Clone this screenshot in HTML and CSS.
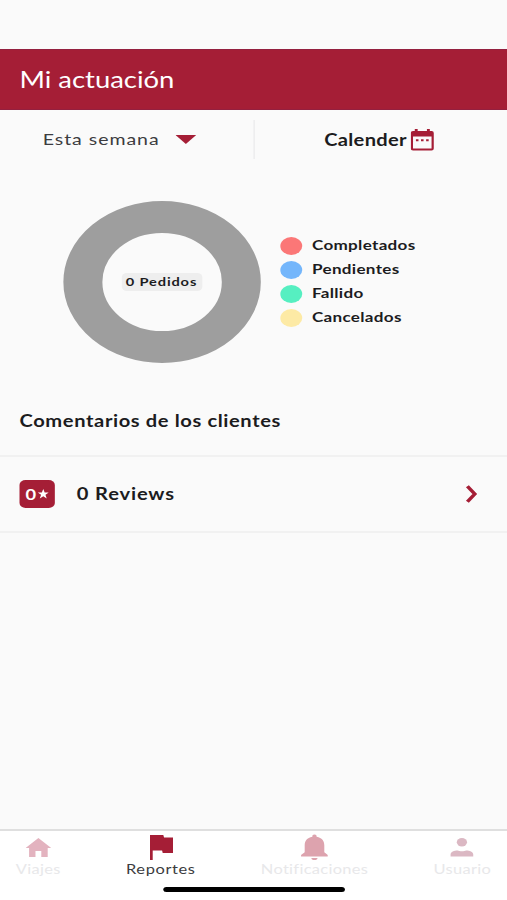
FILE: index.html
```
<!DOCTYPE html>
<html lang="es">
<head>
<meta charset="utf-8">
<title>Mi actuación</title>
<link rel="stylesheet" href="styles.css">
</head>
<body>
<div class="screen">
  <div class="status"></div>
  <header class="header"><h1>Mi actuación</h1></header>
  <div class="filters">
    <div class="filter period"><span>Esta semana</span><svg width="17" height="9" viewBox="0 0 18 10" preserveAspectRatio="none"><path d="M0 0h18L9 10z"/></svg></div>
    <div class="filter calendar"><span>Calender</span><svg width="19" height="22" viewBox="0 0 20 22" preserveAspectRatio="none"><path fill-rule="evenodd" d="M3.500 0h2.500v2h8V0h2.500v2h1.500a2 2 0 0 1 2 2v15.500a2 2 0 0 1-2 2H2a2 2 0 0 1-2-2V4a2 2 0 0 1 2-2h1.500zM2 7.500v12h16v-12zM4.500 10.200h2.200v2H4.500zM8.900 10.200h2.200v2H8.900zM13.300 10.200h2.200v2h-2.200z"/></svg></div>
  </div>
  <section class="chart">
    <div class="donut"><span>0 Pedidos</span></div>
    <ul class="legend">
      <li><i class="dot red"></i><span>Completados</span></li>
      <li><i class="dot blue"></i><span>Pendientes</span></li>
      <li><i class="dot green"></i><span>Fallido</span></li>
      <li><i class="dot yellow"></i><span>Cancelados</span></li>
    </ul>
  </section>
  <h2 class="comments">Comentarios de los clientes</h2>
  <div class="reviews">
    <div class="badge"><span>0</span><svg width="9" height="10" viewBox="0 0 20 20" preserveAspectRatio="none"><path d="M10 0l2.600 7H20l-6 4.600 2.300 7.400L10 14.500 3.700 19 6 11.600 0 7h7.400z"/></svg></div>
    <span class="count">0 Reviews</span>
    <svg class="chevron" width="10" height="18" viewBox="0 0 10 18"><path d="M1.500 1.300L7.600 9l-6.100 7.700"/></svg>
  </div>
  <nav class="nav">
    <a class="item home"><svg width="21" height="26" viewBox="0 0 22 26" preserveAspectRatio="none"><path d="M11 4l11 10h-3v9h-5.500v-6h-5v6H3v-9H0z"/></svg><span>Viajes</span></a>
    <a class="item active"><svg width="19" height="26" viewBox="0 0 19 26"><path d="M0 1h11l.6 2.500H19V19H10.500L10 16.500H2.300V26H0z"/></svg><span>Reportes</span></a>
    <a class="item bell"><svg width="22" height="26" viewBox="0 0 22 26"><path d="M11 .5c1.300 0 1.800.8 1.800 2.200 4.500 1 6.300 4.300 6.300 8.500v7L22 21v1.500H0V21l3-2.800v-7c0-4.200 1.800-7.500 6.300-8.500C9.200 1.300 9.700.5 11 .5zM8.500 24h5a2.500 2 0 0 1-5 0z"/></svg><span>Notificaciones</span></a>
    <a class="item user"><svg width="22" height="26" viewBox="0 0 22 26"><circle cx="11" cy="8.200" r="4.200"/><path d="M1.700 22.500v-2c0-2.800 3-4 5.800-4 1.500 1 5.500 1 7 0 2.800 0 5.800 1.200 5.800 4v2z"/></svg><span>Usuario</span></a>
  </nav>
  <div class="home-bar"></div>
</div>
</body>
</html>
```
FILE: styles.css
```
* { box-sizing: border-box; margin: 0; padding: 0; }
html, body { width: 507px; height: 900px; overflow: hidden; background: #fafafa; }
/* The phone layout is 416px wide and stretched to fill the viewport. */
.screen {
  width: 416px; height: 900px; transform: scaleX(1.21875); transform-origin: 0 0;
  display: flex; flex-direction: column; background: #fafafa; color: #1c1c1e;
  font-family: Lato, "Open Sans", sans-serif; font-weight: 700;
}
svg { display: block; flex: none; fill: #a51e36; }
.status { height: 49px; flex: none; }
.header { height: 61px; flex: none; background: #a51e36; padding-left: 16px; border-top: 1px solid #94203f; border-bottom: 1px solid #94203f; }
.header h1 { font-size: 22.5px; line-height: 59px; font-weight: 400; color: #fff; }
.filters { height: 39px; margin-top: 10px; display: flex; flex: none; }
.filter { width: 207px; display: flex; align-items: center; font-size: 16.5px; line-height: 38px; }
.period { width: 209px; padding-left: 35px; gap: 13px; font-size: 16px; font-weight: 400; color: #3c3c40; border-right: 1px solid #e9e9eb; letter-spacing: .8px; }
.period span { line-height: 36px; padding-bottom: 2px; }
.calendar { padding-left: 57px; gap: 3px; letter-spacing: .25px; }
.chart { display: flex; flex: none; height: 162px; margin: 41.5px 0 0 51.5px; gap: 16px; align-items: center; }
.donut { width: 162px; height: 162px; border: 32px solid #9e9e9e; border-radius: 50%; display: flex; align-items: center; justify-content: center; flex: none; }
.donut span { width: 66px; height: 18px; flex: none; border-radius: 4px; background: #eee; font-size: 12px; line-height: 17px; text-align: center; white-space: nowrap; letter-spacing: .7px; }
.legend { list-style: none; font-size: 14px; letter-spacing: .25px; }
.legend li { display: flex; align-items: center; height: 24px; gap: 8.5px; line-height: 22px; }
.legend span { padding-bottom: 1px; }
.dot { width: 18px; height: 18px; border-radius: 50%; }
.red { background: #fb7777; }
.blue { background: #74b6fb; }
.green { background: #56efc1; }
.yellow { background: #fdeaa5; }
.comments { flex: none; height: 92.5px; padding: 46.5px 0 0 16px; font-size: 16.5px; line-height: 24px; letter-spacing: .5px; }
.reviews { flex: none; height: 78px; border-top: 2px solid #f1f1f1; border-bottom: 2px solid #f1f1f1; display: flex; align-items: center; padding: 0 24px 0 15.5px; }
.badge { width: 29.5px; height: 28px; border-radius: 5px; background: #a51e36; color: #fff; display: flex; align-items: center; justify-content: center; gap: 1px; font-size: 15px; font-variant-numeric: lining-nums; }
.badge svg { fill: #fff; }
.count { margin-left: 18px; font-size: 16.5px; letter-spacing: .7px; }
.chevron { margin-left: auto; fill: none; stroke: #a51e36; stroke-width: 3; }
.nav { height: 71px; margin-top: auto; border-top: 2px solid #dfdfdf; background: #fff; padding: 3px 13px 0; display: flex; justify-content: space-between; flex: none; }
.item { display: flex; flex-direction: column; align-items: center; font-size: 13.5px; font-weight: 400; line-height: 18px; letter-spacing: .25px; color: #e8e8ea; }
.item svg { fill: #e3b3bf; }
.item.bell svg { fill: #dda3ae; }
.item.user svg { fill: #dbb8c3; }
.item.active { color: #3c3c40; letter-spacing: .5px; }
.item.active svg { fill: #a51e36; margin-left: 2px; }
.home-bar { position: absolute; left: 134px; top: 887px; width: 149px; height: 5px; border-radius: 3px; background: #000; }
```
